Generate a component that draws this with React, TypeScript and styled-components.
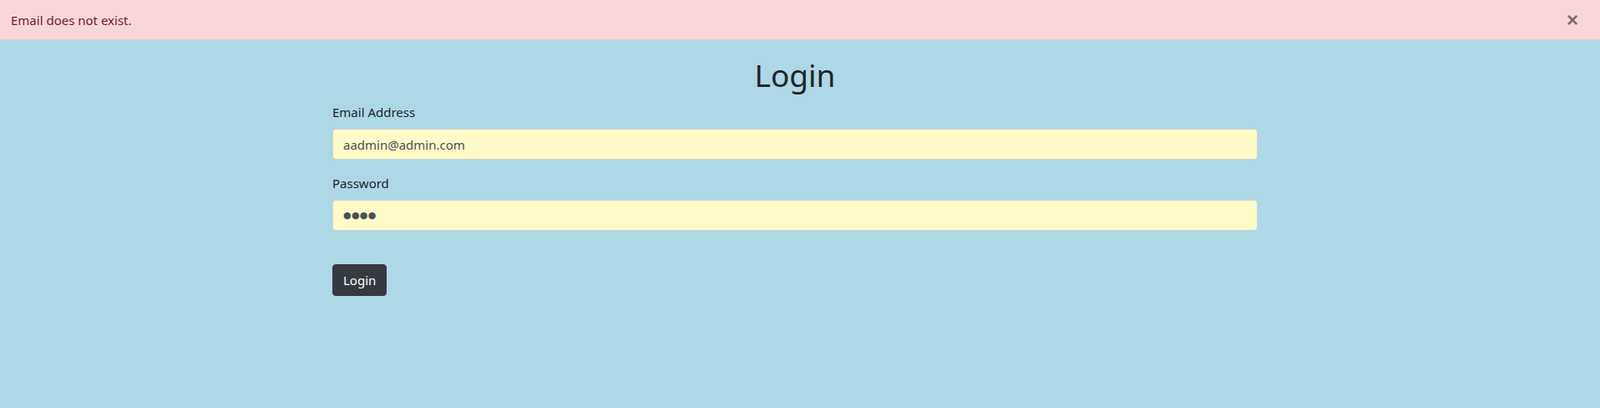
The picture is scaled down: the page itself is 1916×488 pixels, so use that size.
import React from "react";
import styled, { createGlobalStyle } from "styled-components";

const Global = createGlobalStyle`
  html, body { margin: 0; padding: 0; }
  body {
    background: #add8e6;
    font-family: "Noto Sans", "Open Sans", sans-serif;
    font-size: 16px;
    line-height: 24px;
    color: #212529;
  }
  * { box-sizing: border-box; }
`;

const Alert = styled.div`
  display: flex;
  align-items: center;
  justify-content: space-between;
  height: 48px;
  padding: 0 26px 0 13px;
  background: #f8d7da;
  color: #721c24;
  border-bottom: 1px solid #f5c6cb;
`;

const AlertText = styled.span`
  font-size: 15px;
`;

const CloseButton = styled.button`
  border: 0;
  background: transparent;
  padding: 0;
  font-family: "Liberation Sans", Arial, sans-serif;
  font-size: 24px;
  font-weight: 700;
  line-height: 1;
  color: #000;
  opacity: 0.5;
  cursor: pointer;
`;

const Page = styled.main`
  padding: 18px 12px 0 0;
`;

const Container = styled.div`
  width: 1108px;
  margin: 0 auto;
`;

const Title = styled.h1`
  margin: 0 0 8px;
  text-align: center;
  font-size: 37px;
  line-height: 48px;
  font-weight: 400;
`;

const Group = styled.div`
  margin-bottom: 16px;
`;

const Label = styled.label`
  display: block;
  margin-bottom: 8px;
  font-size: 15px;
`;

const Input = styled.input<{ $masked?: boolean }>`
  display: block;
  width: 100%;
  height: 37px;
  padding: 6px 12px;
  font-family: ${(p) => (p.$masked ? `"DejaVu Sans", sans-serif` : "inherit")};
  font-size: ${(p) => (p.$masked ? "11px" : "15px")};
  letter-spacing: ${(p) => (p.$masked ? "0.3px" : "normal")};
  color: #495057;
  background: #fffac8;
  border: 1px solid #ced4da;
  border-radius: 4px;
  outline: none;
`;

const Submit = styled.button`
  display: block;
  margin-top: 40px;
  height: 38px;
  padding: 0 12px;
  font-family: inherit;
  font-size: 15px;
  color: #fff;
  background: #343a40;
  border: 1px solid #343a40;
  border-radius: 4px;
`;

export default function App() {
  return (
    <>
      <Global />
      <Alert role="alert">
        <AlertText>Email does not exist.</AlertText>
        <CloseButton aria-label="Close">×</CloseButton>
      </Alert>
      <Page>
        <Container>
          <Title>Login</Title>
          <Group>
            <Label>Email Address</Label>
            <Input type="email" defaultValue="aadmin@admin.com" readOnly />
          </Group>
          <Group>
            <Label>Password</Label>
            <Input $masked type="text" defaultValue="●●●●" readOnly />
          </Group>
          <Submit>Login</Submit>
        </Container>
      </Page>
    </>
  );
}
